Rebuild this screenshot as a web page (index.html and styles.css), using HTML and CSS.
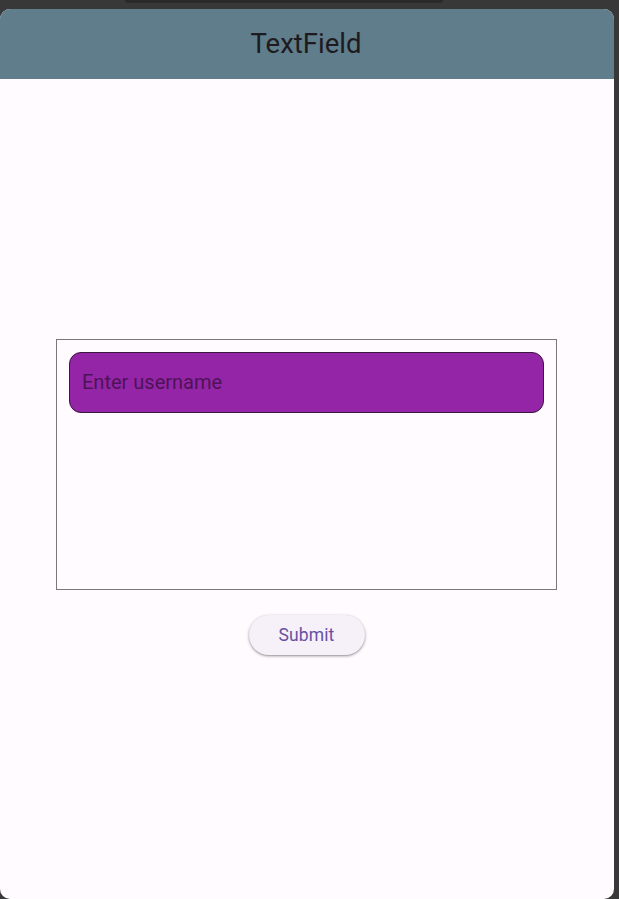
FILE: index.html
```html
<!DOCTYPE html>
<html lang="en">
<head>
<meta charset="utf-8">
<title>TextField</title>
<link rel="stylesheet" href="styles.css">
</head>
<body>
<div class="notch"></div>
<div class="window">
  <header class="appbar"><h1 class="title">TextField</h1></header>
  <main class="content">
    <div class="box">
      <div class="field"><span class="hint">Enter username</span></div>
    </div>
    <button class="submit" type="button">Submit</button>
  </main>
</div>
</body>
</html>
```
FILE: styles.css
```css
html, body {
  margin: 0;
  padding: 0;
  width: 619px;
  height: 899px;
  overflow: hidden;
  background: #383838;
  font-family: Roboto, "Liberation Sans", sans-serif;
}
body {
  display: flex;
  flex-direction: column;
  align-items: flex-start;
}
.notch {
  margin-left: 125px;
  width: 318px;
  height: 3px;
  background: #2a2a2a;
  border-radius: 0 0 8px 8px;
}
.window {
  margin-top: 6px;
  width: 614px;
  height: 890px;
  background: #fffbfe;
  border-radius: 10px;
  overflow: hidden;
  display: flex;
  flex-direction: column;
}
.appbar {
  height: 70px;
  background: #607d8b;
  display: flex;
  align-items: center;
  justify-content: center;
}
.title {
  margin: 0 0 2px 0;
  font-weight: 400;
  font-size: 27.5px;
  color: #1d1b20;
  padding-right: 2px;
}
.content {
  flex: 1;
  display: flex;
  flex-direction: column;
  align-items: center;
  padding-top: 260px;
}
.box {
  box-sizing: border-box;
  width: 501px;
  height: 251px;
  margin-left: -1px;
  border: 1px solid #787878;
  padding: 12px 12px;
}
.field {
  box-sizing: border-box;
  height: 61px;
  background: #9525a7;
  border: 1px solid #3a1640;
  border-radius: 12px;
  display: flex;
  align-items: center;
  padding-left: 12px;
  padding-bottom: 2px;
}
.hint {
  font-size: 20px;
  color: #4d1357;
}
.submit {
  margin-top: 25px;
  margin-left: -1px;
  width: 116px;
  height: 40px;
  border: none;
  border-radius: 20px;
  background: #f6f1f9;
  color: #6750a4;
  font-family: Roboto, "Liberation Sans", sans-serif;
  font-size: 17.5px;
  letter-spacing: 0.1px;
  box-shadow: 0 1px 2px rgba(0,0,0,0.3), 0 1px 3px 1px rgba(0,0,0,0.12);
  padding: 0;
}
```
